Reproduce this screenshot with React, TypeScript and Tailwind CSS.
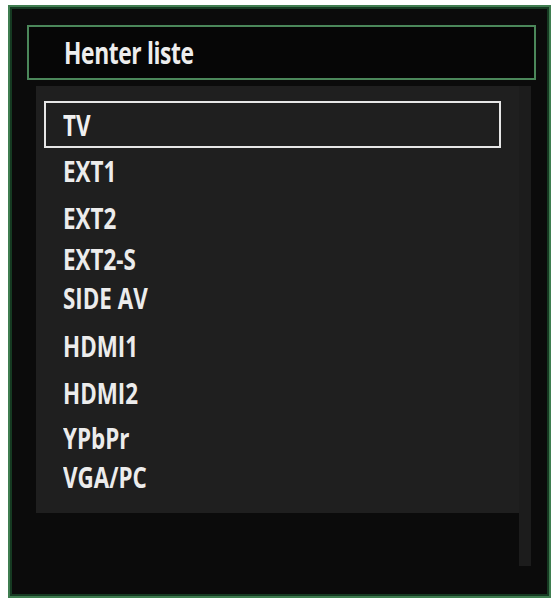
import React from "react";

const rows: { label: string; h: string }[] = [
  { label: "EXT1", h: "h-[46px]" },
  { label: "EXT2", h: "h-[48px]" },
  { label: "EXT2-S", h: "h-[34px]" },
  { label: "SIDE AV", h: "h-[44px]" },
  { label: "HDMI1", h: "h-[52px]" },
  { label: "HDMI2", h: "h-[42px]" },
  { label: "YPbPr", h: "h-[48px]" },
  { label: "VGA/PC", h: "h-[30px]" },
];

const font = { fontFamily: '"Open Sans", "Liberation Sans", sans-serif' };

export default function App() {
  return (
    <div className="w-[554px] h-[603px] bg-white pt-[5px] pl-[8px]" style={font}>
      <div className="w-[543px] h-[593px] border-2 border-[#3f7d50] bg-[#163a22] p-[2px]">
        <div className="w-full h-full bg-[#0b0b0b] pt-[16px]">
          {/* Title */}
          <div className="ml-[15px] w-[509px] h-[55px] border-2 border-[#4b875a] bg-[#060606] flex items-center pl-[35px]">
            <span className="inline-block origin-left scale-x-[0.76] text-[30px] leading-none font-bold text-[#ededed] tracking-[-0.5px]">
              Henter liste
            </span>
          </div>
          {/* List area */}
          <div className="mt-[6px] ml-[24px] flex">
            <div className="w-[483px] h-[427px] bg-[#1f1f1f] pt-[15px] pl-[8px]">
              <div className="w-[457px] h-[47px] border-2 border-[#e6e6e6] flex items-center pl-[17px]">
                <span className="inline-block origin-left scale-x-[0.8] text-[28px] leading-none font-bold text-[#f0f0f0]">
                  TV
                </span>
              </div>
              <div className="flex flex-col pl-[19px]">
                {rows.map((r) => (
                  <div key={r.label} className={`${r.h} flex items-center`}>
                    <span className="inline-block origin-left scale-x-[0.8] text-[28px] leading-none font-bold text-[#ececec]">
                      {r.label}
                    </span>
                  </div>
                ))}
              </div>
            </div>
            <div className="w-[12px] h-[480px] bg-[#1c1c1c]" />
          </div>
        </div>
      </div>
    </div>
  );
}
